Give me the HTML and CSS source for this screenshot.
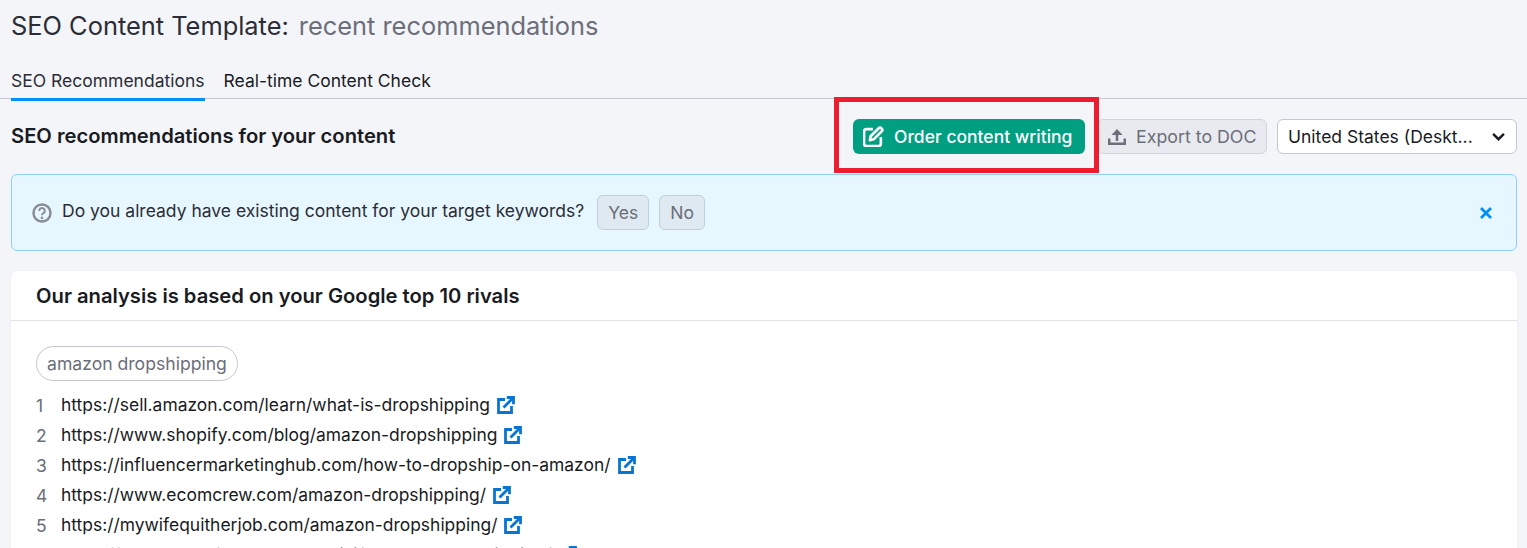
FILE: index.html
```html
<!DOCTYPE html>
<html lang="en">
<head>
<meta charset="utf-8">
<title>SEO Content Template</title>
<link rel="stylesheet" href="styles.css">
</head>
<body>
<header class="title-row">
  <h1 class="title">SEO Content Template:</h1>
  <span class="subtitle">recent recommendations</span>
</header>
<nav class="tabs">
  <a class="tab tab-active">SEO Recommendations</a>
  <a class="tab">Real-time Content Check</a>
</nav>
<section class="toolbar">
  <h2 class="section-title">SEO recommendations for your content</h2>
  <div class="actions">
    <button class="btn-order">
      <svg class="icon-order" viewBox="0 0 20 20" fill="none" stroke="#fff" stroke-width="2.500"><path d="M9.500 3H3a2 2 0 0 0-2 2v12a2 2 0 0 0 2 2h12a2 2 0 0 0 2-2v-6.500"/><path d="M6.500 13.500l.8-3.700 7.900-7.900a1.400 1.400 0 0 1 2 0l.9.900a1.400 1.400 0 0 1 0 2l-7.900 7.900z" stroke-linejoin="round"/></svg>
      Order content writing
    </button>
    <button class="btn-export">
      <svg class="icon-export" viewBox="0 0 18 16" fill="none" stroke="#6c6e79" stroke-width="2.500"><path d="M9 12V3"/><path d="M9 0 3.500 6h11z" fill="#6c6e79" stroke="none"/><path d="M1.200 9.500v5.300h15.600V9.500"/></svg>
      Export to DOC
    </button>
    <button class="select">
      <span>United States (Deskt...</span>
      <svg class="chevron" viewBox="0 0 12 8" fill="none" stroke="#191b23" stroke-width="2.200"><path d="M1 1.500l5 5 5-5"/></svg>
    </button>
    <div class="highlight"></div>
  </div>
</section>
<section class="notice">
  <svg class="icon-help" viewBox="0 0 20 20" fill="none" stroke="#8b8d96" stroke-width="2.500"><circle cx="10" cy="10" r="8.500"/><path d="M7.200 7.900a2.800 2.800 0 1 1 4.300 2.300c-1 .6-1.500 1-1.500 2" stroke-width="2"/><circle cx="10" cy="14.900" r="1.300" fill="#8b8d96" stroke="none"/></svg>
  <span class="notice-text">Do you already have existing content for your target keywords?</span>
  <button class="btn-soft">Yes</button>
  <button class="btn-soft">No</button>
  <svg class="icon-close" viewBox="0 0 14 14" fill="none" stroke="#008ff8" stroke-width="2.800"><path d="M2 2l10 10M12 2 2 12"/></svg>
</section>
<section class="card">
  <h3 class="card-title">Our analysis is based on your Google top 10 rivals</h3>
  <div class="card-body">
    <span class="chip">amazon dropshipping</span>
    <ol class="rivals">
      <li class="rival"><span class="num">1</span><a class="url">https://sell.amazon.com/learn/what-is-dropshipping</a><svg class="ext" viewBox="0 0 18 18" fill="none" stroke="#0a75d1" stroke-width="2.800"><path d="M8 3.500H1.500v13h13V10"/><path d="M6.500 11.500 15.500 2.500"/><path d="M9.800 1.500h6.700v6.700"/></svg></li>
      <li class="rival"><span class="num">2</span><a class="url">https://www.shopify.com/blog/amazon-dropshipping</a><svg class="ext" viewBox="0 0 18 18" fill="none" stroke="#0a75d1" stroke-width="2.800"><path d="M8 3.500H1.500v13h13V10"/><path d="M6.500 11.500 15.500 2.500"/><path d="M9.800 1.500h6.700v6.700"/></svg></li>
      <li class="rival"><span class="num">3</span><a class="url">https://influencermarketinghub.com/how-to-dropship-on-amazon/</a><svg class="ext" viewBox="0 0 18 18" fill="none" stroke="#0a75d1" stroke-width="2.800"><path d="M8 3.500H1.500v13h13V10"/><path d="M6.500 11.500 15.500 2.500"/><path d="M9.800 1.500h6.700v6.700"/></svg></li>
      <li class="rival"><span class="num">4</span><a class="url">https://www.ecomcrew.com/amazon-dropshipping/</a><svg class="ext" viewBox="0 0 18 18" fill="none" stroke="#0a75d1" stroke-width="2.800"><path d="M8 3.500H1.500v13h13V10"/><path d="M6.500 11.500 15.500 2.500"/><path d="M9.800 1.500h6.700v6.700"/></svg></li>
      <li class="rival"><span class="num">5</span><a class="url">https://mywifequitherjob.com/amazon-dropshipping/</a><svg class="ext" viewBox="0 0 18 18" fill="none" stroke="#0a75d1" stroke-width="2.800"><path d="M8 3.500H1.500v13h13V10"/><path d="M6.500 11.500 15.500 2.500"/><path d="M9.800 1.500h6.700v6.700"/></svg></li>
      <li class="rival"><span class="num">6</span><a class="url">https://oberlo.com/ecommerce-wiki/amazon-dropshipping/</a><svg class="ext" viewBox="0 0 18 18" fill="none" stroke="#0a75d1" stroke-width="2.800"><path d="M8 3.500H1.500v13h13V10"/><path d="M6.500 11.500 15.500 2.500"/><path d="M9.800 1.500h6.700v6.700"/></svg></li>
    </ol>
  </div>
</section>
</body>
</html>
```

FILE: styles.css
```css
* { box-sizing: border-box; }
html, body { height: 548px; overflow: hidden; }
body {
  margin: 0;
  padding: 0 10px 0 11px;
  background: #f4f5f9;
  color: #191b23;
  font-family: Inter, "Liberation Sans", sans-serif;
  font-size: 17.500px;
}
button { font-family: inherit; cursor: pointer; }
.title-row { display: flex; align-items: baseline; gap: 10px; height: 60px; padding-top: 10px; }
.title { margin: 0; font-size: 25.400px; line-height: 32px; font-weight: 400; color: #2b2d36; }
.subtitle { font-size: 25.400px; line-height: 32px; color: #6c6e79; }
.tabs { display: flex; gap: 19px; height: 39px; margin: 0 -10px 0 -11px; padding: 0 11px; border-bottom: 1px solid #c4c7cf; }
.tab { height: 41px; padding-top: 9px; line-height: 24px; color: #191b23; }
.tab-active { border-bottom: 3px solid #008ff8; height: 41px; color: #2b2d36; }
.toolbar { display: flex; align-items: center; justify-content: space-between; height: 75px; }
.section-title { margin: -2px 0 0; font-size: 20.200px; line-height: 24px; font-weight: 600; color: #191b23; }
.actions { position: relative; display: flex; align-items: center; gap: 10px; }
.highlight { position: absolute; left: -19px; top: -22px; width: 265px; height: 76px; border: 5px solid #ed1c2e; pointer-events: none; }
.btn-order { display: flex; align-items: center; gap: 10px; width: 232px; height: 35px; margin-right: 2px; padding: 0 0 0 10px; border: 0; border-radius: 6px; background: #009f81; color: #fff; font-size: 17.500px; font-weight: 500; }
.icon-order { width: 21px; height: 21px; flex: none; }
.icon-export { width: 18px; height: 16px; flex: none; }
.btn-export { display: flex; align-items: center; gap: 10px; width: 170px; height: 35px; padding: 0 0 0 10px; border: 1px solid #d1d4db; border-radius: 6px; background: #e9eaef; color: #6c6e79; font-size: 17.800px; }
.select { display: flex; align-items: center; justify-content: space-between; width: 240px; height: 35px; padding: 0 11px 0 10px; border: 1px solid #c4c7cf; border-radius: 6px; background: #fff; color: #191b23; font-size: 17.500px; }
.chevron { width: 13px; height: 9px; }
.notice { display: flex; align-items: center; height: 77px; border: 1px solid #8fd0ff; border-radius: 6px; background: #e7f7ff; padding: 0 23px 0 20px; }
.icon-help { width: 20px; height: 20px; margin-right: 10px; }
.notice-text { color: #2b2d36; margin-right: 13px; margin-top: -4px; }
.btn-soft { height: 35px; padding: 0 10px; margin-right: 10px; border: 1px solid #c4ced9; border-radius: 6px; background: #dfe9f2; color: #6c6e79; font-size: 17.500px; }
.icon-close { width: 14px; height: 14px; margin-left: auto; }
.card { margin-top: 20px; background: #fff; border-radius: 6px 6px 0 0; box-shadow: 0 0 1px #d1d4db; height: 300px; overflow: hidden; }
.card-title { display: flex; align-items: center; height: 50px; margin: 0; padding-left: 25px; border-bottom: 1px solid #e0e1e9; font-size: 20.200px; font-weight: 600; color: #191b23; }
.card-body { padding: 25px 25px 0; }
.chip { display: inline-flex; align-items: center; height: 35px; padding: 0 10px; border: 1px solid #c4c7cf; border-radius: 18px; color: #6c6e79; font-size: 17.600px; }
.rivals { list-style: none; margin: 9px 0 0; padding: 0; }
.rival { display: flex; align-items: center; height: 30px; }
.num { width: 25px; color: #6c6e79; }
.url { color: #191b23; font-size: 17.450px; margin-top: -2px; }
.ext { width: 18px; height: 18px; margin-left: 7px; flex: none; }
```
